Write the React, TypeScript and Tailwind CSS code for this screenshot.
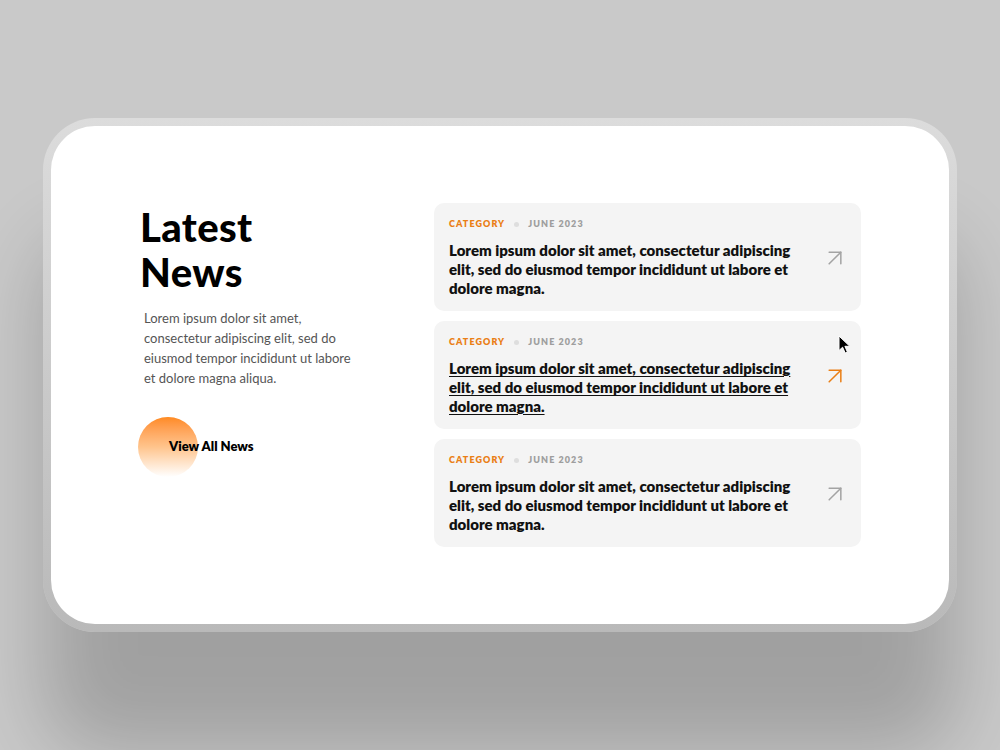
import { ArrowUpRight } from "lucide-react";

type Post = {
  category: string;
  date: string;
  title: string;
  active?: boolean;
};

const posts: Post[] = [
  {
    category: "Category",
    date: "June 2023",
    title:
      "Lorem ipsum dolor sit amet, consectetur adipiscing elit, sed do eiusmod tempor incididunt ut labore et dolore magna.",
  },
  {
    category: "Category",
    date: "June 2023",
    title:
      "Lorem ipsum dolor sit amet, consectetur adipiscing elit, sed do eiusmod tempor incididunt ut labore et dolore magna.",
    active: true,
  },
  {
    category: "Category",
    date: "June 2023",
    title:
      "Lorem ipsum dolor sit amet, consectetur adipiscing elit, sed do eiusmod tempor incididunt ut labore et dolore magna.",
  },
];

function Pointer() {
  return (
    <svg width="14" height="20" viewBox="0 0 14 20" className="absolute right-[9px] top-[14px]">
      <path d="M1 1 L1 15.5 L4.6 12.2 L7.2 18 L9.4 17 L6.9 11.3 L11.8 11.3 Z" fill="#000" stroke="#fff" strokeWidth="1" strokeLinejoin="round" />
    </svg>
  );
}

function PostCard({ post }: { post: Post }) {
  return (
    <a
      href="#"
      className="relative flex items-center gap-4 rounded-[10px] bg-[#f4f4f4] pl-[15px] pr-[12px] pt-[15px] pb-[13px]"
    >
      <div className="flex-1">
        <div className="flex items-center gap-[9px] text-[9px] font-extrabold uppercase tracking-[0.12em] leading-[12px]">
          <span className="text-[#ea7f16]">{post.category}</span>
          <span className="h-[5px] w-[5px] rounded-full bg-[#dedede]" />
          <span className="text-[#9e9e9e]">{post.date}</span>
        </div>
        <h3
          className={
            "mt-[11px] text-[15px] font-extrabold leading-[19px] text-[#111] " +
            (post.active ? "underline decoration-1 underline-offset-2" : "")
          }
        >
          {post.title}
        </h3>
      </div>
      <ArrowUpRight
        size={28}
        strokeWidth={1.3}
        className={post.active ? "text-[#ea7f16]" : "text-[#a3a3a3]"}
      />
      {post.active && <Pointer />}
    </a>
  );
}

export default function App() {
  return (
    <div
      className="flex h-[750px] w-full items-start justify-center bg-[#c9c9c9] pt-[118px]"
      style={{ fontFamily: "Lato, 'Noto Sans', sans-serif" }}
    >
      {/* device frame */}
      <div className="w-[914px] rounded-[52px] bg-gradient-to-b from-[#dcdcdc] to-[#b9b9b9] p-[8px] shadow-[0_120px_80px_0_rgba(0,0,0,0.2)]">
        <div className="flex h-[498px] items-start justify-between rounded-[44px] bg-white px-[88px] pt-[77px]">
          {/* intro column */}
          <div className="w-[240px] pl-[1px] pt-[2px]">
            <h2 className="text-[40px] font-black leading-[45px] tracking-[0.01em] text-black">
              Latest
              <br />
              News
            </h2>
            <p className="mt-[13px] w-[218px] pl-[4px] text-[13px] leading-[20px] text-[#555]">
              Lorem ipsum dolor sit amet, consectetur adipiscing elit, sed do eiusmod tempor
              incididunt ut labore et dolore magna aliqua.
            </p>
            <a href="#" className="relative mt-[29px] flex h-[60px] items-center">
              <span className="absolute left-[-2px] top-0 h-[60px] w-[60px] rounded-full bg-gradient-to-b from-[#ff8a1f] via-[#ffc48c] to-white" />
              <span className="relative pl-[29px] text-[13px] font-extrabold text-black">
                View All News
              </span>
            </a>
          </div>

          {/* post list */}
          <div className="flex w-[427px] flex-col gap-[10px]">
            {posts.map((post, i) => (
              <PostCard key={i} post={post} />
            ))}
          </div>
        </div>
      </div>
    </div>
  );
}
